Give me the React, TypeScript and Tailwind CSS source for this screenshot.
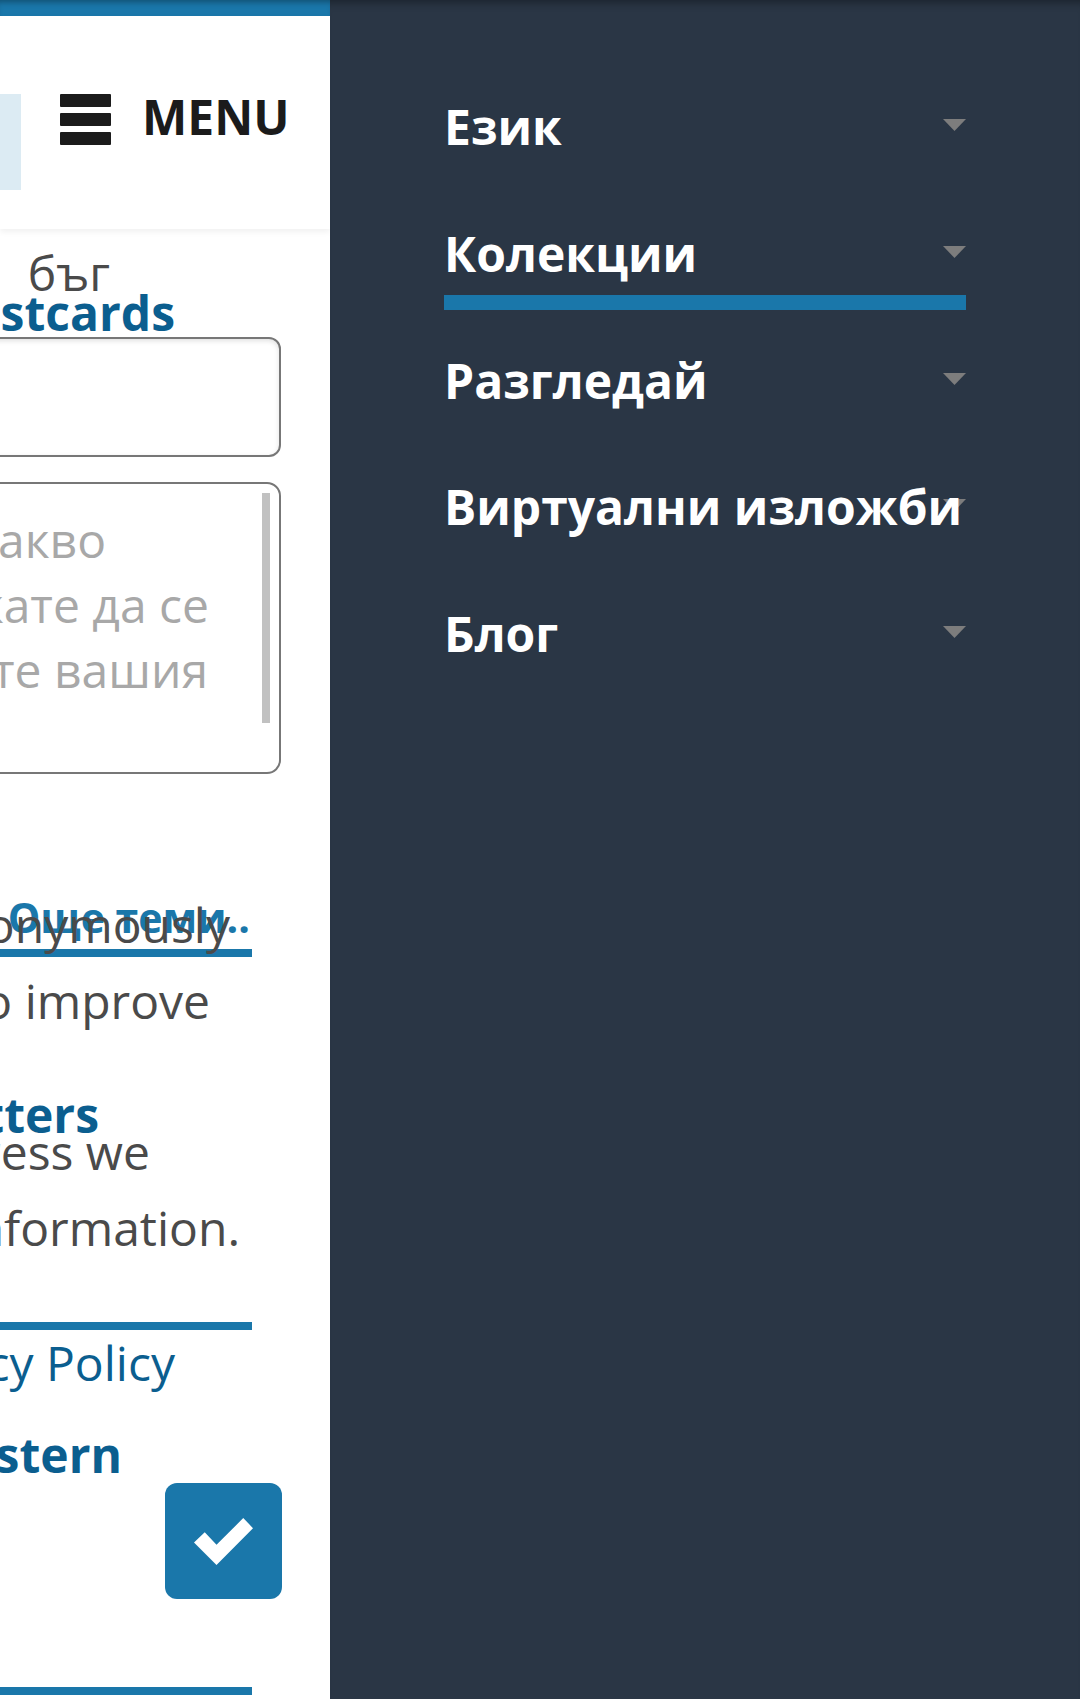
import type { ReactNode } from 'react';

const menuItems = [
  { label: 'Език', active: false },
  { label: 'Колекции', active: true },
  { label: 'Разгледай', active: false },
  { label: 'Виртуални изложби', active: false },
  { label: 'Блог', active: false },
];

function Caret() {
  return (
    <svg className="absolute right-0 top-[51px]" width="23" height="12" viewBox="0 0 23 12">
      <polygon points="0,0 23,0 11.5,12" fill="#7d7d7d" />
    </svg>
  );
}

function Row({ className, children }: { className: string; children: ReactNode }) {
  return <div className={`flex justify-end whitespace-nowrap ${className}`}>{children}</div>;
}

export default function App() {
  return (
    <div className="flex h-[1699px] w-[1080px] overflow-hidden font-['Open_Sans',sans-serif]">
      {/* page pushed aside by the menu */}
      <div className="w-[330px] shrink-0 overflow-hidden bg-white">
        <div className="h-[16px] bg-[#1a77aa] shadow-[inset_0_6px_6px_-4px_rgba(0,0,0,0.35)]" />
        <header className="relative z-10 flex h-[213px] items-start bg-white pt-[78px] shadow-[0_3px_6px_rgba(0,0,0,0.06)]">
          <div className="h-[96px] w-[21px] shrink-0 bg-[#dcebf3]" />
          <div className="ml-[39px] flex w-[51px] shrink-0 flex-col gap-[6px]">
            <span className="h-[13px] rounded-[1px] bg-[#1b1b1b]" />
            <span className="h-[13px] rounded-[1px] bg-[#1b1b1b]" />
            <span className="h-[13px] rounded-[1px] bg-[#1b1b1b]" />
          </div>
          <span className="-mt-[1px] ml-[31px] whitespace-nowrap text-[48px] font-bold leading-[48px] text-[#1b1b1b]">
            MENU
          </span>
        </header>

        <Row className="mt-[20px] pr-[220px] text-[48px] leading-[48px] text-[#4a4a4a]">бъг</Row>
        <Row className="-mt-[8px] pr-[155px] text-[48px] font-bold leading-[48px] text-[#0b5e8f]">
          Bulgarian Postcards
        </Row>

        <Row className="pr-[49px]">
          <div className="h-[120px] w-[400px] shrink-0 rounded-[12px] border-2 border-[#777] shadow-[inset_0_2px_5px_rgba(0,0,0,0.12)]" />
        </Row>

        <Row className="mt-[25px] pr-[49px]">
          <div className="relative h-[292px] w-[400px] shrink-0 overflow-hidden rounded-[14px] border-2 border-[#777] pt-[23px] text-[48px] leading-[65px] text-[#a8a8a8]">
            <Row className="pr-[173px]">Моля, опишете какво</Row>
            <Row className="pr-[70px]">искате да се</Row>
            <Row className="pr-[71px]">подобри. Въведете вашия</Row>
            <div className="absolute right-[9px] top-[9px] h-[230px] w-[8px] bg-[#c1c1c1]" />
          </div>
        </Row>

        <Row className="mt-[123px] pr-[80px] text-[41px] font-bold leading-[41px] text-[#1a77aa]">Още теми..</Row>
        <div className="mt-[11px] h-[8px] w-[252px] bg-[#1a77aa]" />

        <div className="-mt-[70px] text-[48px] leading-[76px] text-[#4a4a4a]">
          <Row className="pr-[100px]">Used anonymously</Row>
          <Row className="pr-[120px]">to improve</Row>
        </div>

        <Row className="mt-[52px] pr-[231px] text-[48px] font-bold leading-[48px] text-[#0b5e8f]">Newsletters</Row>
        <div className="-mt-[25px] text-[48px] leading-[76px] text-[#4a4a4a]">
          <Row className="pr-[180px]">email address we</Row>
          <Row className="pr-[90px]">send you information.</Row>
        </div>

        <div className="mt-[56px] h-[8px] w-[252px] bg-[#1a77aa]" />
        <Row className="mt-[9px] pr-[155px] text-[48px] leading-[48px] text-[#0b5e8f]">Privacy Policy</Row>
        <Row className="mt-[44px] pr-[208px] text-[48px] font-bold leading-[48px] text-[#0b5e8f]">Eastern</Row>

        <Row className="mt-[4px] pr-[48px]">
          <button className="flex h-[116px] w-[117px] shrink-0 items-center justify-center rounded-[12px] bg-[#1a77aa]">
            <svg width="59" height="47" viewBox="28.3 33.7 58.7 46.6">
              <polygon points="39,47.7 50.7,60.3 77.3,33.7 87,43.7 50.7,80.3 28.3,58" fill="#ffffff" />
            </svg>
          </button>
        </Row>

        <div className="mt-[88px] h-[8px] w-[252px] bg-[#1a77aa]" />
      </div>

      {/* off-canvas menu */}
      <nav className="flex-1 bg-[#2a3645] px-[114px] pt-[68px] shadow-[inset_0_10px_10px_-8px_rgba(0,0,0,0.4)]">
        {menuItems.map((item) => (
          <div key={item.label} className="relative h-[126.75px] pt-[35px]">
            <Caret />
            <div className="relative whitespace-nowrap text-[48px] font-bold leading-[48px] text-white">
              {item.label}
            </div>
            {item.active && <div className="mt-[17px] h-[15px] bg-[#1a77aa]" />}
          </div>
        ))}
      </nav>
    </div>
  );
}
